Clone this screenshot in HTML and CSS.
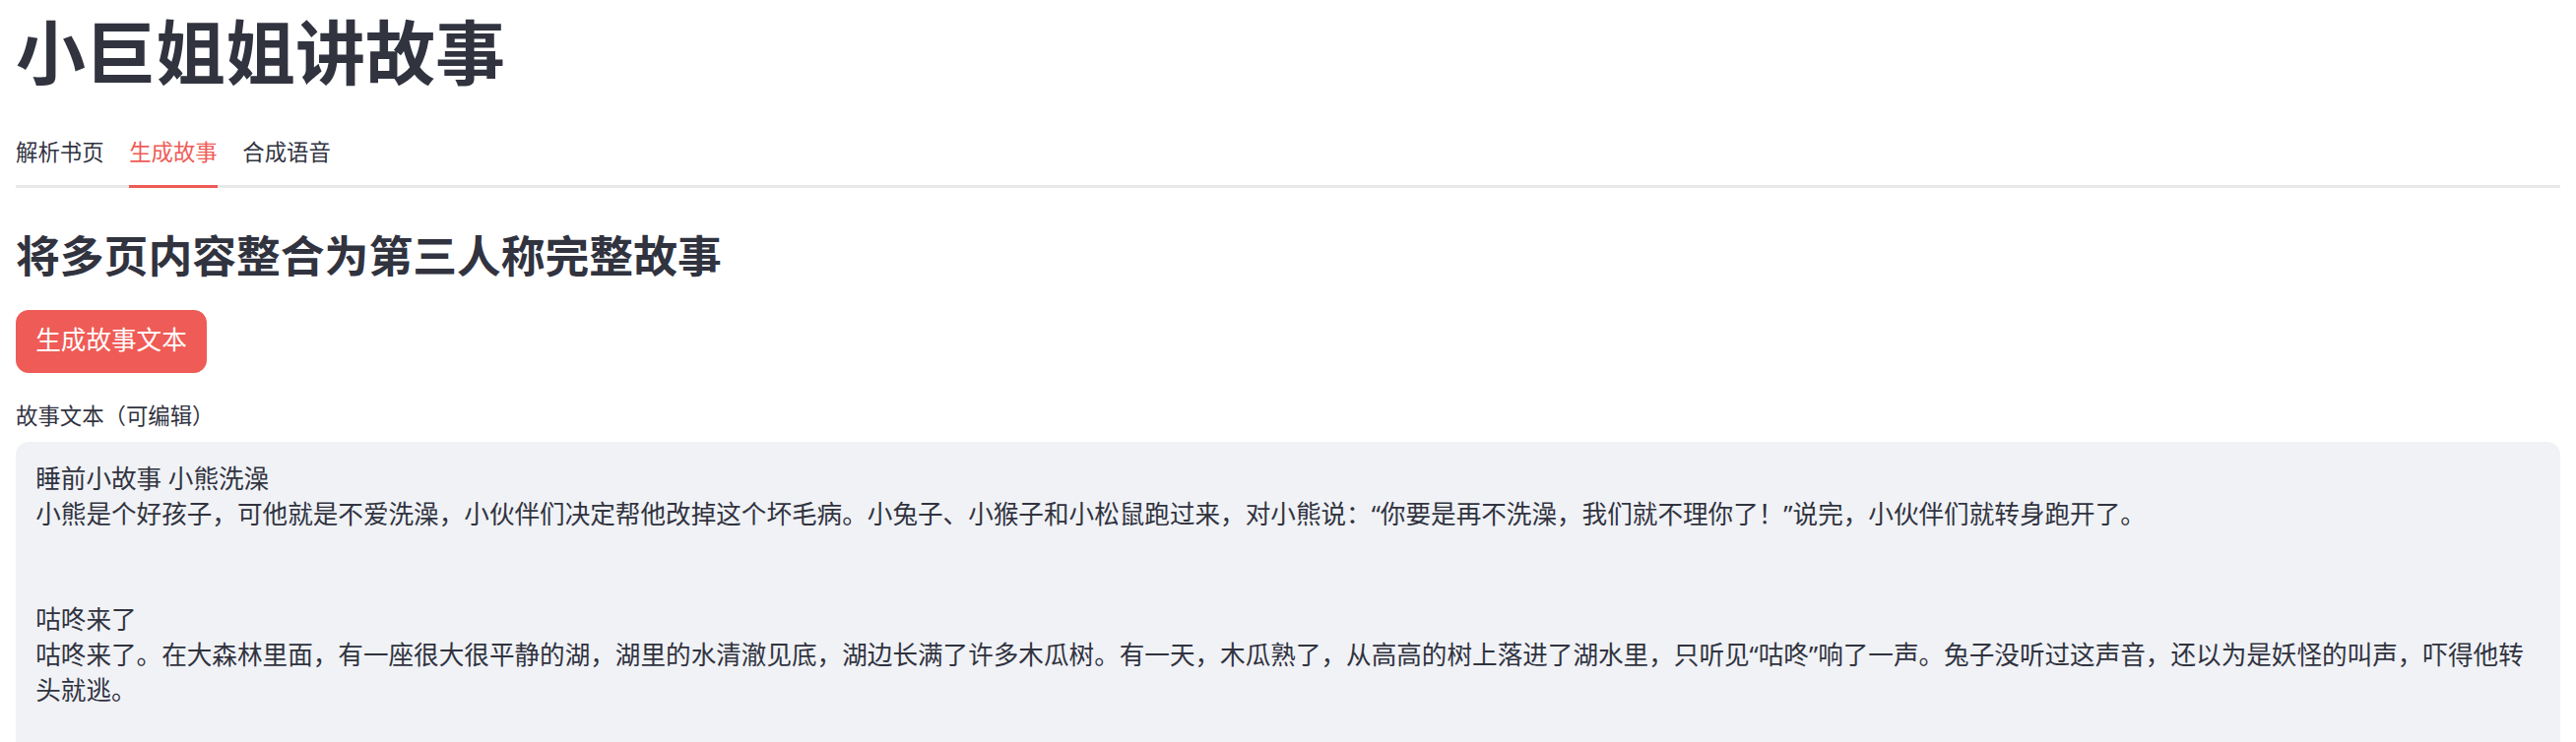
FILE: index.html
```html
<!DOCTYPE html>
<html lang="zh-CN">
<head>
<meta charset="utf-8">
<title>小巨姐姐讲故事</title>
<link rel="stylesheet" href="styles.css">
</head>
<body>
<main class="app">
  <h1 class="title">小巨姐姐讲故事</h1>
  <nav class="tabs">
    <div class="tab">解析书页</div>
    <div class="tab active">生成故事</div>
    <div class="tab">合成语音</div>
  </nav>
  <section class="panel">
    <h3 class="subtitle">将多页内容整合为第三人称完整故事</h3>
    <button class="btn-primary" type="button">生成故事文本</button>
    <label class="field-label" for="story">故事文本（可编辑）</label>
    <textarea id="story" class="story-text">睡前小故事 小熊洗澡
小熊是个好孩子，可他就是不爱洗澡，小伙伴们决定帮他改掉这个坏毛病。小兔子、小猴子和小松鼠跑过来，对小熊说：“你要是再不洗澡，我们就不理你了！”说完，小伙伴们就转身跑开了。


咕咚来了
咕咚来了。在大森林里面，有一座很大很平静的湖，湖里的水清澈见底，湖边长满了许多木瓜树。有一天，木瓜熟了，从高高的树上落进了湖水里，只听见“咕咚”响了一声。兔子没听过这声音，还以为是妖怪的叫声，吓得他转头就逃。
</textarea>
  </section>
</main>
</body>
</html>
```

FILE: styles.css
```css
html, body {
  margin: 0;
  padding: 0;
  background: #ffffff;
}

body {
  font-family: "Noto Sans", "Noto Sans CJK SC", sans-serif;
  color: #31333f;
}

.app {
  padding: 0 16px;
  display: flex;
  flex-direction: column;
}

.title {
  margin: 10px 0 0;
  font-size: 71px;
  line-height: 1.2;
  font-weight: 700;
}

.tabs {
  display: flex;
  gap: 25.6px;
  margin-top: 32px;
  border-bottom: 3px solid #e8e8ea;
}

.tab {
  font-size: 22.4px;
  line-height: 1.6;
  padding: 10px 0 15px;
  margin-bottom: -3px;
  border-bottom: 3px solid transparent;
}

.tab.active {
  color: #ef5b56;
  border-bottom-color: #ef5b56;
}

.panel {
  display: flex;
  flex-direction: column;
  align-items: flex-start;
}

.subtitle {
  margin: 42px 0 0;
  font-size: 44.8px;
  line-height: 1.2;
  font-weight: 700;
}

.btn-primary {
  margin-top: 28px;
  height: 64px;
  padding: 0 19.2px;
  border: 1px solid #ef5b56;
  border-radius: 12.8px;
  background: #ef5b56;
  color: #ffffff;
  font-family: inherit;
  font-size: 25.6px;
  line-height: 1.6;
  display: flex;
  align-items: center;
}

.field-label {
  margin-top: 26px;
  font-size: 22.4px;
  line-height: 1.6;
}

.story-text {
  margin-top: 8px;
  box-sizing: border-box;
  width: 100%;
  height: 420px;
  padding: 19.2px;
  border: 1px solid #f0f2f6;
  border-radius: 12.8px;
  background: #f0f2f6;
  color: #31333f;
  font-family: "Noto Sans", "Noto Sans CJK SC", sans-serif;
  font-size: 25.6px;
  line-height: 1.4;
  resize: none;
  outline: none;
}
```
